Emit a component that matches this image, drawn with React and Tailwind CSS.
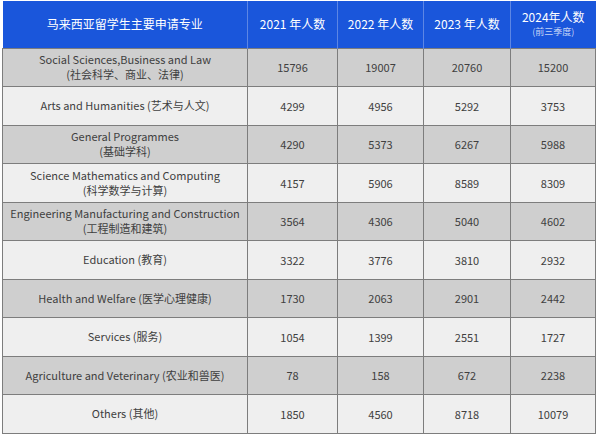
import React from "react"

const rows = [
  ["Social Sciences,Business and Law", "(社会科学、商业、法律)", 15796, 19007, 20760, 15200],
  ["Arts and Humanities (艺术与人文)", null, 4299, 4956, 5292, 3753],
  ["General Programmes", "(基础学科)", 4290, 5373, 6267, 5988],
  ["Science Mathematics and Computing", "(科学数学与计算)", 4157, 5906, 8589, 8309],
  ["Engineering Manufacturing and Construction", "(工程制造和建筑)", 3564, 4306, 5040, 4602],
  ["Education (教育)", null, 3322, 3776, 3810, 2932],
  ["Health and Welfare (医学心理健康)", null, 1730, 2063, 2901, 2442],
  ["Services (服务)", null, 1054, 1399, 2551, 1727],
  ["Agriculture and Veterinary (农业和兽医)", null, 78, 158, 672, 2238],
  ["Others (其他)", null, 1850, 4560, 8718, 10079],
]

function App() {
  return (
    <main
      className="w-[601px] h-[438px] bg-white pt-[1px] pl-[2px]"
      style={{ fontFamily: '"Noto Sans CJK SC", "Noto Sans", sans-serif' }}
    >
      <table className="border-collapse table-fixed w-[593px] text-center">
        <colgroup>
          <col className="w-[245px]" />
          <col className="w-[90px]" />
          <col className="w-[86px]" />
          <col className="w-[87px]" />
          <col className="w-[85px]" />
        </colgroup>
        <thead>
          <tr className="bg-[#1a56db] text-white text-[12px] h-[47px]">
            <th className="font-normal border-r border-[#5d86e4]">马来西亚留学生主要申请专业</th>
            <th className="font-normal border-r border-[#5d86e4]">2021 年人数</th>
            <th className="font-normal border-r border-[#5d86e4]">2022 年人数</th>
            <th className="font-normal border-r border-[#5d86e4]">2023 年人数</th>
            <th className="font-normal leading-[15px]">
              <div>2024年人数</div>
              <div className="text-[9px] text-[#c5d5f7]">(前三季度)</div>
            </th>
          </tr>
        </thead>
        <tbody className="text-[11px] text-[#404040]">
          {rows.map((r, i) => (
            <tr key={i} className={`h-[38.5px] ${i % 2 === 0 ? "bg-[#cfcfcf]" : "bg-[#efefef]"}`}>
              <td className="border border-[#7d7d7d] leading-[15px] p-0">
                <div>{r[0]}</div>
                {r[1] && <div>{r[1]}</div>}
              </td>
              {r.slice(2).map((v, j) => (
                <td key={j} className="border border-[#7d7d7d] p-0">{v}</td>
              ))}
            </tr>
          ))}
        </tbody>
      </table>
    </main>
  )
}

export default App
